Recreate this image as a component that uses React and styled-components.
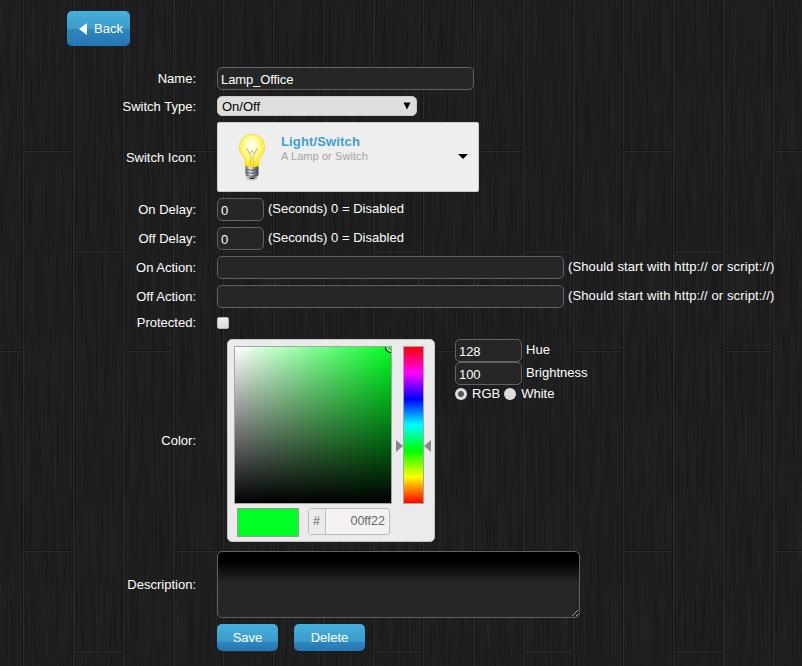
import React from "react";
import styled, { createGlobalStyle } from "styled-components";

const Global = createGlobalStyle`
  * { box-sizing: border-box; }
  html, body { margin: 0; background: #1e1e1e; }
  body { font-family: "Liberation Sans", Arial, sans-serif; font-size: 13px; color: #fff; overflow: hidden; }
  input, textarea, button { font-family: inherit; letter-spacing: inherit; }
`;

const Page = styled.main`
  position: relative;
  isolation: isolate;
  width: 802px;
  height: 666px;
  overflow: hidden;
`;

const Backdrop = styled.svg`
  position: absolute;
  inset: 0;
  z-index: -1;
`;

const Button = styled.button`
  display: inline-flex;
  align-items: center;
  justify-content: center;
  width: ${(p) => p.$width}px;
  height: ${(p) => p.$height || 27}px;
  padding: 0;
  border: 0;
  border-radius: 5px;
  color: #fff;
  font-size: 13px;
  line-height: 15px;
  background: linear-gradient(#45b0dc 0, #3b9bcb ${(p) => p.$split || 66}%, #2d86bf ${(p) => p.$split || 66}%, #2576b3 100%);
`;

const BackButton = styled(Button)`
  padding-left: 5px;
  svg { margin: 1px 7px 0 0; }
`;

const BackBar = styled.header`
  height: 67px;
  padding: 11px 0 0 67px;
`;

const Form = styled.form`
  display: flex;
  flex-direction: column;
`;

const Row = styled.div`
  display: grid;
  grid-template-columns: 196px 1fr;
  column-gap: 21px;
  height: ${(p) => p.$height}px;
`;

const Label = styled.label`
  text-align: right;
  padding-top: ${(p) => p.$top}px;
  line-height: 15px;
`;

const Field = styled.div`
  display: flex;
  align-items: flex-start;
  gap: ${(p) => p.$gap || 4}px;
`;

const Input = styled.input`
  width: ${(p) => p.$width}px;
  height: 23px;
  padding: 2px 3px 0;
  border: 1px solid #626262;
  border-radius: 5px;
  background: #262626;
  color: #fff;
  font-size: 13px;
  letter-spacing: -0.1px;
  outline: 0;
`;

const Hint = styled.span`
  line-height: 15px;
  padding-top: 3px;
  white-space: nowrap;
  letter-spacing: ${(p) => (p.$wide ? 0.12 : 0.02)}px;
`;

const Select = styled.div`
  display: flex;
  align-items: center;
  justify-content: space-between;
  width: 200px;
  height: 20px;
  padding: 0 5px 0 4px;
  border: 1px solid #c9c9c9;
  border-radius: 5px;
  background: #dedede;
  color: #000;
`;

const IconPicker = styled.div`
  display: flex;
  width: 262px;
  height: 70px;
  padding: 10px;
  border: 1px solid #ccc;
  border-radius: 2px;
  background: #eee;
  & > svg:last-child { margin: 21px 0 0 auto; }
`;

const PickerText = styled.div`
  margin-left: 5px;
  padding-top: 1px;
  color: #a5a5a5;
  font-size: 11px;
  line-height: 14px;
  letter-spacing: 0.08px;
  strong { display: block; color: #419fd1; font-size: 13px; line-height: 15px; letter-spacing: 0.15px; }
`;

const Checkbox = styled.span`
  width: 12px;
  height: 12px;
  margin-top: 3px;
  border: 1px solid #b8b8b8;
  border-radius: 2px;
  background: linear-gradient(#eee, #dcdcdc);
`;

const ColorPanel = styled.div`
  display: grid;
  grid-template-columns: 158px 36px;
  grid-template-rows: 158px 29px;
  row-gap: 4px;
  width: 208px;
  height: 203px;
  margin-left: 10px;
  padding: 6px;
  border: 1px solid #c4c4c4;
  border-radius: 5px;
  background: #ebebeb;
`;

const Saturation = styled.div`
  position: relative;
  overflow: hidden;
  border: 1px solid #a5a5a5;
  background: linear-gradient(transparent, #000), linear-gradient(90deg, #fff, #00ff22);
  svg { position: absolute; right: -5px; top: -5px; }
`;

const HueRow = styled.div`
  display: flex;
  align-items: center;
  margin-left: 4px;
  svg { flex: none; margin-top: 41px; }
`;

const HueBar = styled.div`
  flex: none;
  width: 21px;
  height: 158px;
  border: 1px solid #a5a5a5;
  background: linear-gradient(#f00, #f0f 16.67%, #00f 33.33%, #0ff 50%, #0f0 66.67%, #ff0 83.33%, #f00);
`;

const PanelFooter = styled.div`
  display: flex;
  grid-column: 1 / -1;
  gap: 9px;
  padding-left: 3px;
`;

const Swatch = styled.div`
  width: 62px;
  height: 29px;
  border: 1px solid #999;
  background: #00ff22;
`;

const HexBox = styled.div`
  display: flex;
  width: 82px;
  height: 27px;
  border: 1px solid #bbb;
  border-radius: 3px;
  background: #f2f2f2;
  color: #666;
  line-height: 25px;
  font-size: 12.5px;
`;

const Hash = styled.span`
  width: 17px;
  padding-right: 1px;
  border-right: 1px solid #bbb;
  text-align: center;
  background: #ebebeb;
`;

const HexValue = styled.span`
  flex: 1;
  padding-right: 4px;
  text-align: right;
`;

const ColorValues = styled.div`
  margin-left: 16px;
  width: 150px;
`;

const Radios = styled.div`
  display: flex;
  align-items: center;
  height: 17px;
`;

const Radio = styled.span`
  width: 12px;
  height: 12px;
  margin-right: 5px;
  border-radius: 50%;
  background: ${(p) => (p.$checked ? "radial-gradient(circle, #555 0 2.5px, #ddd 3.5px)" : "#ddd")};
`;

const RadioText = styled.span`
  line-height: 15px;
  margin-right: 4px;
`;

const TextArea = styled.textarea`
  width: 363px;
  height: 67px;
  border: 1px solid #626262;
  border-radius: 5px;
  background: linear-gradient(#000 0, #000 9px, #262626 31px);
  color: #fff;
  color-scheme: dark;
  outline: 0;
`;

const PLANKS = Array.from({ length: 17 }, (_, i) => i * 50 - 27);

function Wood() {
  return (
    <Backdrop width="802" height="666" shapeRendering="crispEdges">
      <defs>
        <filter id="grain" x="0" y="0" width="100%" height="100%" colorInterpolationFilters="sRGB">
          <feTurbulence type="fractalNoise" baseFrequency="0.55 0.012" numOctaves="2" seed="7" />
          <feColorMatrix values="0.065 0 0 0 0.086  0.065 0 0 0 0.086  0.065 0 0 0 0.086  0 0 0 0 1" />
        </filter>
      </defs>
      <rect width="802" height="666" filter="url(#grain)" />
      {PLANKS.map((x, i) => {
        const y = [351, 151, 251][i % 3];
        return (
          <g key={x}>
            <rect x={x - 1} width="1" height="666" fill="#141414" />
            <rect x={x} width="1" height="666" fill="#2d2d2d" />
            {[y, y + 400].map((v) => (
              <g key={v}>
                <rect x={x} y={v - 1} width="49" height="1" fill="#171717" />
                <rect x={x} y={v} width="49" height="1" fill="#2a2a2a" />
              </g>
            ))}
          </g>
        );
      })}
    </Backdrop>
  );
}

function Bulb() {
  return (
    <svg width="48" height="48" viewBox="0 0 48 48">
      <defs>
        <radialGradient id="glass" cx=".48" cy=".36" r=".62">
          <stop offset="0" stopColor="#fff" />
          <stop offset=".35" stopColor="#fffcc0" />
          <stop offset=".68" stopColor="#fff25a" />
          <stop offset="1" stopColor="#fbe600" />
        </radialGradient>
        <linearGradient id="cap">
          <stop stopColor="#555" /><stop offset=".35" stopColor="#f4f4f4" /><stop offset=".65" stopColor="#8a8d94" /><stop offset="1" stopColor="#3c3f45" />
        </linearGradient>
      </defs>
      <ellipse cx="24" cy="45" rx="6" ry="2.5" fill="#aaa" opacity=".6" />
      <path d="M24 1.5C16.500 1.500 11.500 7 11.500 14c0 5.500 3.500 8.500 5 12 .8 2 .5 4 1 7 3 1.500 10 1.500 13 0 .5-3 .2-5 1-7 1.500-3.500 5-6.500 5-12C36.500 7 31.500 1.500 24 1.500z" fill="url(#glass)" stroke="#f0dc30" strokeWidth=".9" />
      <path d="M22 33l1-9-4.500-9 4 6 1.500-4 1.500 4 4-6-4.500 9 1 9" fill="none" stroke="#bdb27a" strokeWidth=".7" />
      <path d="M17.500 33q6.500 2.500 13 0v9l-3.500 3h-6l-3.500-3z" fill="url(#cap)" />
      <path d="M18 36.500q6 2 12-.5M18 39.500q6 2 12-.5M19 42.500q5 2 10-.5" fill="none" stroke="#555a64" strokeWidth="1" />
      <path d="M21 44.500h6l-1 1.500h-4z" fill="#25282c" />
    </svg>
  );
}

export default function App() {
  return (
    <>
      <Global />
      <Page>
        <Wood />
        <BackBar>
          <BackButton type="button" $width={63} $height={35} $split={52}>
            <svg width="8" height="12"><path d="M8 0v12L0 6z" fill="#fff" /></svg>Back
          </BackButton>
        </BackBar>
        <Form>
          <Row $height={29}><Label $top={4}>Name:</Label><Field><Input $width={257} defaultValue="Lamp_Office" /></Field></Row>
          <Row $height={26}>
            <Label $top={3}>Switch Type:</Label>
            <Field><Select>On/Off<svg width="8" height="8"><path d="M0.500 0.500h7L4 7.500z" /></svg></Select></Field>
          </Row>
          <Row $height={76}>
            <Label $top={28}>Switch Icon:</Label>
            <Field>
              <IconPicker>
                <Bulb />
                <PickerText><strong>Light/Switch</strong>A Lamp or Switch</PickerText>
                <svg width="10" height="6"><path d="M0 0h10L5 5z" /></svg>
              </IconPicker>
            </Field>
          </Row>
          <Row $height={29}><Label $top={4}>On Delay:</Label><Field><Input $width={47} defaultValue="0" /><Hint>(Seconds) 0 = Disabled</Hint></Field></Row>
          <Row $height={29}><Label $top={4}>Off Delay:</Label><Field><Input $width={47} defaultValue="0" /><Hint>(Seconds) 0 = Disabled</Hint></Field></Row>
          <Row $height={29}><Label $top={4}>On Action:</Label><Field><Input $width={347} /><Hint $wide>(Should start with http:// or script://)</Hint></Field></Row>
          <Row $height={29}><Label $top={4}>Off Action:</Label><Field><Input $width={347} /><Hint $wide>(Should start with http:// or script://)</Hint></Field></Row>
          <Row $height={25}><Label $top={1}>Protected:</Label><Field><Checkbox /></Field></Row>
          <Row $height={212}>
            <Label $top={94}>Color:</Label>
            <Field>
              <ColorPanel>
                <Saturation>
                  <svg width="11" height="11"><circle cx="5.5" cy="5.5" r="4.8" fill="none" stroke="#000" strokeWidth="1.3" /><circle cx="5.5" cy="5.5" r="3.7" fill="none" stroke="#fff" /></svg>
                </Saturation>
                <HueRow>
                  <svg width="7" height="12"><path d="M0 0v12l7-6z" fill="#888" /></svg>
                  <HueBar />
                  <svg width="7" height="12"><path d="M7 0v12L0 6z" fill="#888" /></svg>
                </HueRow>
                <PanelFooter><Swatch /><HexBox><Hash>#</Hash><HexValue>00ff22</HexValue></HexBox></PanelFooter>
              </ColorPanel>
              <ColorValues>
                <Field><Input $width={67} defaultValue="128" /><Hint>Hue</Hint></Field>
                <Field><Input $width={67} defaultValue="100" /><Hint>Brightness</Hint></Field>
                <Radios><Radio $checked /><RadioText>RGB</RadioText><Radio /><RadioText>White</RadioText></Radios>
              </ColorValues>
            </Field>
          </Row>
          <Row $height={73}>
            <Label $top={26}>Description:</Label>
            <Field><TextArea /></Field>
          </Row>
          <Row $height={27}><span /><Field $gap={16}><Button type="button" $width={61}>Save</Button><Button type="button" $width={71}>Delete</Button></Field></Row>
        </Form>
      </Page>
    </>
  );
}
